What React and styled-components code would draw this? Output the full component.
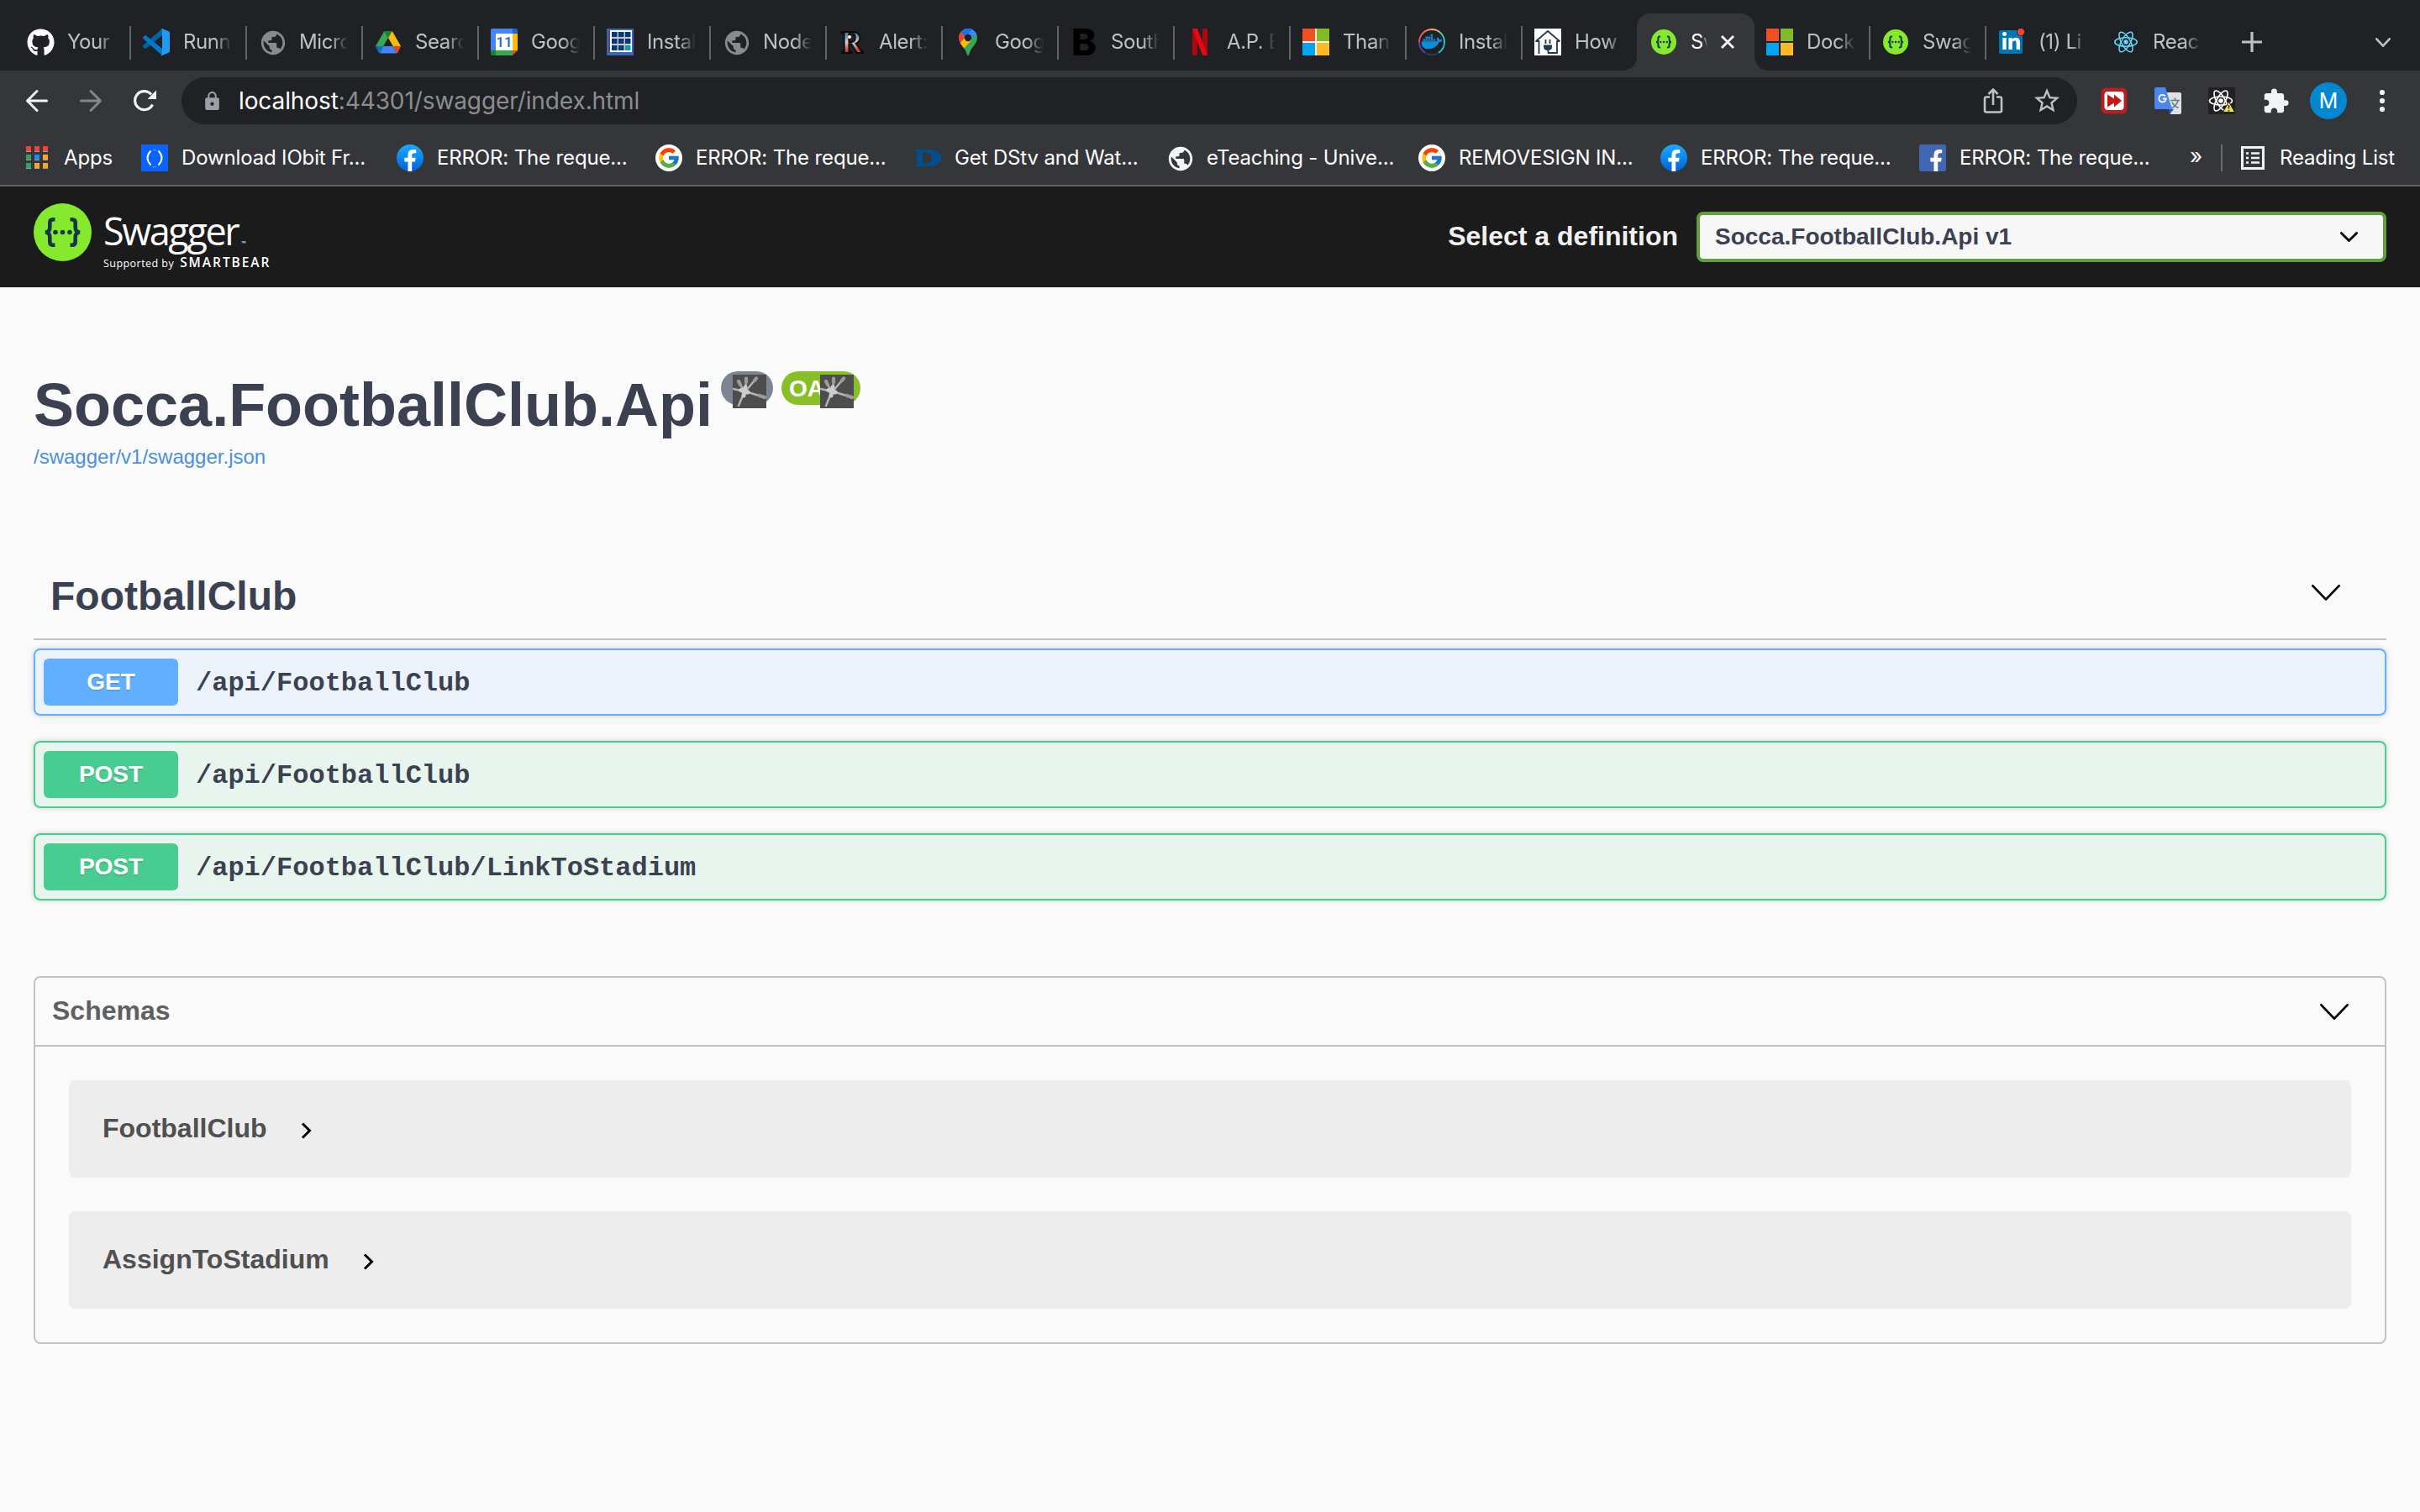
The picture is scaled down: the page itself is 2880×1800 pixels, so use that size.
import React from 'react';
import styled, { createGlobalStyle } from 'styled-components';
import { FaGithub, FaDocker, FaLinkedinIn } from 'react-icons/fa';
import { FcGoogle } from 'react-icons/fc';
import { MdPublic, MdExtension, MdLock, MdStarBorder } from 'react-icons/md';

const Global = createGlobalStyle`
  * { box-sizing: border-box; }
  body { margin: 0; background: #fafafa; font-family: "Liberation Sans", Arial, sans-serif; }
  h1, h2, h3, p { margin: 0; }
  svg { display: block; flex: none; }
`;

/* ---------- browser chrome ---------- */
const Page = styled.div`
  width: 2880px;
  height: 1800px;
  overflow: hidden;
  background: #fafafa;
`;
const Chrome = styled.header`
  font-family: Inter, "Noto Sans", sans-serif;
  background: #35363a;
`;
const TabStrip = styled.div`
  display: flex;
  height: 84px;
  padding: 16px 0 0 18px;
  background: #202124;
`;
const Tab = styled.div`
  flex: none;
  width: ${p => p.$w || 138}px;
  height: 68px;
  display: flex;
  align-items: center;
  gap: 16px;
  padding: 0 0 0 14px;
  position: relative;
`;
const Divider = styled.i`
  width: 2px;
  height: 40px;
  background: #606367;
  margin: 2px 0 0 auto;
`;
const ActiveTab = styled(Tab)`
  width: 140px;
  background: #35363a;
  border-radius: 16px 16px 0 0;
  margin: 0 0 0 -2px;
  padding-left: 16px;
  &::before, &::after {
    content: "";
    position: absolute;
    bottom: 0;
    width: 16px;
    height: 16px;
  }
  &::before { left: -16px; background: radial-gradient(circle at 0 0, transparent 15.5px, #35363a 16px); }
  &::after { right: -16px; background: radial-gradient(circle at 100% 0, transparent 15.5px, #35363a 16px); }
`;
const Favicon = styled.span`
  flex: none;
  width: 32px;
  height: 32px;
  display: grid;
  place-items: center;
`;
const TabTitle = styled.span`
  flex: none;
  width: ${p => p.$w || 58}px;
  overflow: hidden;
  white-space: nowrap;
  font-size: 24px;
  line-height: 36px;
  letter-spacing: -0.4px;
  color: ${p => (p.$active ? '#fff' : '#bdc1c6')};
  mask-image: linear-gradient(90deg, #000 65%, transparent);
`;
const StripActions = styled.div`
  flex: 1;
  display: flex;
  justify-content: space-between;
  align-items: center;
  padding: 0 35px 0 32px;
`;
const Toolbar = styled.div`
  height: 72px;
  display: flex;
  align-items: center;
  padding: 0 24px 0 28px;
`;
const NavButtons = styled.div`
  display: flex;
  gap: 32px;
  width: 188px;
`;
const Omnibox = styled.div`
  width: 2256px;
  height: 56px;
  border-radius: 28px;
  background: #202124;
  display: flex;
  align-items: center;
  padding: 0 18px 0 24px;
`;
const Url = styled.span`
  flex: 1;
  margin-left: 19px;
  font-size: 28px;
  line-height: 40px;
  letter-spacing: -0.1px;
  color: #8c8d90;
  white-space: nowrap;
  b { font-weight: 400; color: #fff; }
`;
const OmniActions = styled.div`
  display: flex;
  align-items: center;
  gap: 30px;
`;
const Extensions = styled.div`
  display: flex;
  align-items: center;
  padding-left: 28px;
  gap: 32px;
`;
const Avatar = styled.div`
  width: 44px;
  height: 44px;
  margin: 0 -6px 0 -8px;
  border-radius: 50%;
  background: #0288d1;
  color: #fff;
  display: grid;
  place-items: center;
  font-size: 25px;
`;
const Bookmarks = styled.nav`
  height: 66px;
  display: flex;
  align-items: center;
  padding: 0 0 0 28px;
  border-bottom: 2px solid #5f6066;
`;
const Bookmark = styled.div`
  flex: none;
  width: ${p => p.$w}px;
  display: flex;
  align-items: center;
  gap: ${p => p.$gap || 16}px;
  white-space: nowrap;
  font-size: 24px;
  line-height: 32px;
  letter-spacing: -0.15px;
  color: #fff;
`;
const More = styled.span`
  width: 37px;
  color: #fff;
  font-size: 26px;
  line-height: 32px;
  margin: -4px 0 0 14px;
`;
const BookmarkRule = styled.i`
  width: 2px;
  height: 32px;
  background: #6b6c70;
  margin-right: 22px;
`;

/* ---------- swagger page ---------- */
const Topbar = styled.div`
  height: 120px;
  background: #1b1b1b;
  display: flex;
  align-items: center;
  justify-content: space-between;
  padding: 0 40px;
`;
const Logo = styled.div`
  display: flex;
  gap: 14px;
  height: 80px;
  color: #fff;
  font-family: "Open Sans", sans-serif;
`;
const LogoText = styled.div`
  display: flex;
  flex-direction: column;
`;
const Wordmark = styled.div`
  display: flex;
  align-items: baseline;
  font-size: 45px;
  line-height: 58px;
  height: 58px;
  letter-spacing: -2.4px;
  margin-top: 4px;
  small { font-size: 7px; letter-spacing: 0; margin-left: 4px; }
`;
const Supported = styled.div`
  display: flex;
  align-items: baseline;
  gap: 7px;
  margin-top: -2px;
  font-size: 12.5px;
  line-height: 20px;
  letter-spacing: 0.45px;
  b { font-size: 15.5px; font-weight: 600; letter-spacing: 1.95px; }
`;
const Definition = styled.label`
  display: flex;
  align-items: center;
  gap: 22px;
  color: #f0f0f0;
  font-size: 32px;
  font-weight: 700;
  line-height: 36px;
  span { margin-top: -2px; }
`;
const Select = styled.div`
  width: 821px;
  height: 60px;
  display: flex;
  align-items: center;
  justify-content: space-between;
  padding: 0 30px 0 18px;
  border: 4px solid #62a03f;
  border-radius: 8px;
  background: #f7f7f7;
  color: #3b4151;
  font-size: 28px;
`;
const Main = styled.main`
  padding: 0 40px;
  color: #3b4151;
`;
const Info = styled.section`
  height: 326px;
  padding-top: 98px;
`;
const TitleRow = styled.div`
  display: flex;
  align-items: flex-start;
  gap: 10px;
`;
const Title = styled.h1`
  font-size: 72px;
  line-height: 84px;
`;
const Pill = styled.span`
  position: relative;
  width: ${p => p.$w}px;
  height: 40px;
  margin-top: 2px;
  border-radius: 20px;
  background: ${p => p.$bg};
  color: #fff;
  font-size: 28px;
  font-weight: 700;
  line-height: 41px;
  padding-left: 9px;
  svg { position: absolute; right: 8px; top: 4px; }
`;
const SpecLink = styled.a`
  display: block;
  margin-top: 6px;
  font-size: 24px;
  line-height: 28px;
  color: #4990e2;
`;
const TagHeader = styled.div`
  display: flex;
  align-items: center;
  justify-content: space-between;
  height: 94px;
  padding: 0 55px 0 20px;
  border-bottom: 2px solid rgba(59, 65, 81, 0.3);
  h2 { font-size: 48px; line-height: 56px; margin-top: -8px; }
  svg { margin-top: -18px; }
`;
const Operations = styled.div`
  display: flex;
  flex-direction: column;
  gap: 30px;
  padding-top: 10px;
`;
const Operation = styled.div`
  height: 80px;
  display: flex;
  align-items: center;
  gap: 21px;
  padding: 0 10px;
  border: 2px solid ${p => p.$color};
  border-radius: 8px;
  background: ${p => p.$bg};
  box-shadow: 0 0 6px rgba(0, 0, 0, 0.19);
`;
const Method = styled.span`
  width: 160px;
  height: 56px;
  border-radius: 6px;
  background: ${p => p.$color};
  color: #fff;
  font-size: 28px;
  font-weight: 700;
  line-height: 56px;
  text-align: center;
  text-shadow: 0 2px 0 rgba(0, 0, 0, 0.1);
`;
const Path = styled.span`
  font-family: "Liberation Mono", monospace;
  font-size: 32px;
  font-weight: 700;
  line-height: 40px;
  margin-top: 3px;
`;
const Schemas = styled.section`
  margin-top: 90px;
  height: 438px;
  border: 2px solid rgba(59, 65, 81, 0.3);
  border-radius: 8px;
`;
const SchemasHeader = styled.div`
  height: 82px;
  display: flex;
  align-items: center;
  justify-content: space-between;
  padding: 0 43px 0 20px;
  border-bottom: 2px solid rgba(59, 65, 81, 0.3);
  color: #606060;
  h3 { font-size: 32px; line-height: 38px; margin-top: -3px; }
`;
const Models = styled.div`
  display: flex;
  flex-direction: column;
  gap: 40px;
  padding: 40px;
`;
const Model = styled.div`
  height: 116px;
  display: flex;
  align-items: center;
  gap: 40px;
  padding: 0 40px;
  border-radius: 8px;
  background: #ededed;
  color: #505050;
  font-size: 32px;
  font-weight: 700;
  span { line-height: 36px; margin-top: -3px; }
  svg { margin-top: 4px; }
`;

/* ---------- drawings ---------- */
const Braces = ({ s = 32 }) => (
  <svg width={s} height={s} viewBox="0 0 69 69">
    <circle cx="34.5" cy="34.5" r="34.5" fill="#85ea2d" />
    <g fill="none" stroke="#173647" strokeWidth="4.6">
      <path d="M25.5 19.3h-2.2q-4 0-4 4v5.4q0 5.8-5.6 5.8q5.6 0 5.6 5.8v5.4q0 4 4 4h2.2" />
      <path d="M43.5 19.3h2.2q4 0 4 4v5.4q0 5.8 5.6 5.8q-5.6 0-5.6 5.8v5.4q0 4-4 4h-2.2" />
    </g>
    <g fill="#173647"><circle cx="26" cy="34.5" r="2.8" /><circle cx="34.5" cy="34.5" r="2.8" /><circle cx="43" cy="34.5" r="2.8" /></g>
  </svg>
);
const Code = () => (
  <svg width="32" height="32" viewBox="0 0 32 32">
    <path d="M23 0v8L4 23.5q-1 .8-2 0L.4 22q-.8-1 0-2z" fill="#0065a9" />
    <path d="M23 32v-8L4 8.500q-1-.8-2 0L.4 10q-.8 1 0 2z" fill="#007acc" />
    <path d="M23 0l8 3.500q1 .5 1 1.500v22q0 1-1 1.500L23 32q-1 0-1.500-.6Q23 31 23 29V3q0-2-1.500-2.400Q22 0 23 0z" fill="#1f9cf0" />
  </svg>
);
const Drive = () => (
  <svg width="30" height="27" viewBox="0 0 30 27">
    <path d="M10.300 0L0 18l4.500 8 L15 8z" fill="#34a853" />
    <path d="M10.300 0h9.400L15 8z" fill="#188038" />
    <path d="M19.700 0L30 18h-9.200L15 8z" fill="#fbbc04" />
    <path d="M0 18h9.200L5 26q-1.500-.5-2-1.500z" fill="#1967d2" />
    <path d="M9.200 18h11.600L25 26.500H5z" fill="#4285f4" />
    <path d="M20.800 18H30l-3 6.500q-.5 1.200-2 2z" fill="#ea4335" />
  </svg>
);
const Calendar = () => (
  <svg width="32" height="32" viewBox="0 0 32 32">
    <path d="M2 0h24v6H0V2q0-2 2-2z" fill="#4285f4" /><path d="M0 6h6v20H0z" fill="#4285f4" />
    <path d="M26 0h4q2 0 2 2v4h-6z" fill="#1967d2" /><path d="M26 6h6v20h-6z" fill="#fbbc04" />
    <path d="M0 26h6v6H2q-2 0-2-2z" fill="#188038" /><path d="M6 26h20v6H6z" fill="#34a853" />
    <path d="M26 26h6l-6 6z" fill="#ea4335" /><path d="M6 6h20v20H6z" fill="#fff" />
    <text x="16" y="22" textAnchor="middle" fontFamily="Roboto, sans-serif" fontWeight="500" fontSize="17" fill="#1967d2">11</text>
  </svg>
);
const Table = () => (
  <svg width="32" height="32" viewBox="0 0 32 32">
    <path d="M0 0h32v32H0z" fill="#3a66b8" /><path d="M2 2h28v26H2z" fill="#fff" /><path d="M2 2h2v26H2z" fill="#555" />
    <path d="M6 4h22v22H6z" fill="#c9c3cc" />
    {[4, 12, 20].map(y => [6, 14, 22].map(x => (
      <rect key={x + '-' + y} x={x} y={y} width="6.500" height="6" fill={x === 22 && y === 20 ? '#0aa39a' : '#003b75'} />
    )))}
  </svg>
);
const LetterR = () => (
  <svg width="32" height="32" viewBox="0 0 32 32">
    <defs>
      <linearGradient id="flag" x1="0" y1="0" x2="0" y2="1">
        <stop offset="0.300" stopColor="#5b86a6" /><stop offset="0.500" stopColor="#d9d2c4" /><stop offset="0.750" stopColor="#c8403a" />
      </linearGradient>
    </defs>
    <text x="3" y="29" fontFamily="Liberation Serif, serif" fontWeight="700" fontSize="38" fill="url(#flag)" stroke="#0b0b0c" strokeWidth="1.800" textLength="26" lengthAdjust="spacingAndGlyphs">R</text>
    <circle cx="13" cy="10" r="2" fill="#fff" />
  </svg>
);
const Pin = () => (
  <svg width="22" height="32" viewBox="0 0 22 32">
    <defs><clipPath id="pin"><path d="M11 0a11 11 0 0 1 11 11c0 8-8 11-9.800 20q-.3 1-1.200 1t-1.200-1C8 22 0 19 0 11A11 11 0 0 1 11 0z" /></clipPath></defs>
    <g clipPath="url(#pin)">
      <path d="M0 0h22v32H0z" fill="#34a853" />
      <path d="M3-3h22v8L11 14z" fill="#4285f4" />
      <path d="M-2 0L3 3l8 8-8 9-5-3z" fill="#ea4335" /><path d="M2 3L12-3l5 3-9 10z" fill="#1a73e8" />
      <path d="M1 18l7-8 7 4-9 10z" fill="#fbbc04" />
    </g>
    <circle cx="11" cy="11" r="4.200" fill="#202124" />
  </svg>
);
const LetterB = () => (
  <svg width="32" height="32" viewBox="0 0 32 32">
    <text x="1" y="32" fontFamily="Inter, sans-serif" fontWeight="800" fontSize="44" fill="#000" textLength="30" lengthAdjust="spacingAndGlyphs">B</text>
  </svg>
);
const Netflix = () => (
  <svg width="32" height="32" viewBox="0 0 32 32">
    <path d="M7 0h6v31.500L7 32zM19 0h6v32l-6-.500z" fill="#b1060f" /><path d="M7 0h6l12 32-6-.500z" fill="#e50914" />
  </svg>
);
const Windows = ({ gap = 2, line }) => (
  <svg width="32" height="32" viewBox="0 0 32 32">
    {line && <path d="M0 0h32v32H0z" fill="#f5f2e4" />}
    <path d={`M0 0h${16 - gap / 2}v${16 - gap / 2}H0z`} fill="#f25022" />
    <path d={`M${16 + gap / 2} 0H32v${16 - gap / 2}H${16 + gap / 2}z`} fill="#7fba27" />
    <path d={`M0 ${16 + gap / 2}h${16 - gap / 2}V32H0z`} fill="#00a4ef" />
    <path d={`M${16 + gap / 2} ${16 + gap / 2}H32V32H${16 + gap / 2}z`} fill="#ffb927" />
  </svg>
);
const Docker = () => (
  <svg width="32" height="32" viewBox="0 0 32 32">
    <defs><linearGradient id="ring" x1="0" y1="0" x2="1" y2="0"><stop stopColor="#f0506e" /><stop offset=".6" stopColor="#ffb05c" /><stop offset="1" stopColor="#35d0d8" /></linearGradient></defs>
    <path d="M1 16a15 15 0 0 1 30 0" fill="none" stroke="url(#ring)" strokeWidth="1.800" />
    <path d="M31 16a15 15 0 0 1-7 12.700" fill="none" stroke="#28c8d8" strokeWidth="1.800" />
    <path d="M24 28.700A15 15 0 0 1 8 28.700" fill="none" stroke="#1c4260" strokeWidth="1.800" />
    <path d="M8 28.700A15 15 0 0 1 1 16" fill="none" stroke="#5b4aa0" strokeWidth="1.800" />
    <FaDocker x="3.500" y="3" size={25} color="#0f8dd6" />
  </svg>
);
const House = () => (
  <svg width="32" height="32" viewBox="0 0 32 32">
    <path d="M0 0h32v32H0z" fill="#fff" />
    <g fill="none" stroke="#22384c" strokeWidth="1.800">
      <path d="M5.500 30V15H2L16 3l14 12h-3v14h-10.500v-4" strokeLinejoin="round" /><path d="M13.500 13v5M18.500 13v5" />
    </g>
    <path d="M11 19.500h10v2q0 4.500-5 4.500t-5-4.500z" fill="#22384c" />
  </svg>
);
const LinkedIn = () => (
  <svg width="32" height="32" viewBox="0 0 32 32">
    <rect x="1" y="2" width="28" height="28" rx="2" fill="#0077b5" />
    <FaLinkedinIn x="3.500" y="4" size={24} color="#fff" />
    <circle cx="27" cy="4" r="5" fill="#202124" /><circle cx="27" cy="4" r="4.200" fill="#f44336" />
  </svg>
);
const ReactLogo = () => (
  <svg width="32" height="32" viewBox="0 0 32 32">
    <g fill="none" stroke="#61dafb" strokeWidth="1.500">
      {[0, 60, 120].map(a => <ellipse key={a} cx="16" cy="16" rx="13.300" ry="5.200" transform={`rotate(${a} 16 16)`} />)}
    </g>
    <circle cx="16" cy="16" r="2.700" fill="#61dafb" />
  </svg>
);
const Facebook = ({ square }) => (
  <svg width="32" height="32" viewBox="0 0 32 32">
    <defs><linearGradient id="fb" x1="0" y1="0" x2="0" y2="1"><stop stopColor="#18acfe" /><stop offset="1" stopColor="#0163e0" /></linearGradient></defs>
    {square ? <rect width="32" height="32" rx="2" fill="#4267b2" /> : <circle cx="16" cy="16" r="16" fill="url(#fb)" />}
    <path transform={square ? 'translate(4 0)' : undefined} d="M13.500 32V20.500H9.300v-4.700h4.200v-3.600q0-6.300 6.200-6.300 1.800 0 3.500.3v4h-2q-3 0-3 2.700v2.900h4.600l-.8 4.700h-3.800V32z" fill="#fff" />
  </svg>
);
const Google = () => (
  <svg width="32" height="32" viewBox="0 0 32 32"><circle cx="16" cy="16" r="16" fill="#fff" /><FcGoogle x="2" y="2" size={28} /></svg>
);
const Iobit = () => (
  <svg width="32" height="32" viewBox="0 0 32 32">
    <path d="M0 0h32v32H0z" fill="#0a63ff" />
    <path d="M11.500 7.500q-8 8.500 0 17M20.500 7.500q8 8.500 0 17" fill="none" stroke="#fff" strokeWidth="1.900" />
    <path d="M14 6.500L18.500 7M13.500 27l4.500-.5" stroke="#4d8cff" strokeWidth="1.500" />
  </svg>
);
const LetterD = () => (
  <svg width="32" height="32" viewBox="0 0 32 32">
    <path fillRule="evenodd" d="M0 6h16Q32 6 32 16T16 26H0l3-3V9zM10 9.500v13h4q7 0 7-6.500t-7-6.500z" fill="#00508f" />
  </svg>
);
const AppsGrid = () => (
  <svg width="32" height="32" viewBox="0 0 32 32">
    {[['#f44336', '#f44336', '#f44336'], ['#34a160', '#1e88f5', '#f5a623'], ['#34a160', '#f5a623', '#f5a623']].map((r, y) =>
      r.map((c, x) => (
        <g key={x + '-' + y}><rect x={3 + x * 10} y={2 + y * 10} width="6" height="7" fill="#9aa0a6" /><rect x={3 + x * 10} y={2 + y * 10} width="6" height="6" fill={c} /></g>
      ))
    )}
  </svg>
);
const ReadingList = () => (
  <svg width="28" height="28" viewBox="0 0 28 28" fill="none" stroke="#f1f3f4" strokeWidth="3">
    <path d="M1.500 1.500h25v25h-25z" /><path d="M6 8.500h3M12 8.500h10M6 14h3M12 14h10M6 19.500h3M12 19.500h10" strokeWidth="2.600" />
  </svg>
);
const Back = ({ color, flip }) => (
  <svg width="32" height="32" viewBox="0 0 32 32" fill="none" stroke={color} strokeWidth="3" strokeLinecap="round" strokeLinejoin="round" transform={flip ? 'scale(-1 1)' : undefined}>
    <path d="M27.500 16H5M16 4.500L4.500 16 16 27.500" />
  </svg>
);
const Reload = () => (
  <svg width="32" height="32" viewBox="0 0 32 32">
    <path d="M25.500 20.500A11 11 0 1 1 24 8.500" fill="none" stroke="#f1f3f4" strokeWidth="3.200" />
    <path d="M30 3.500V14H19.500z" fill="#f1f3f4" />
  </svg>
);
const Share = () => (
  <svg width="32" height="32" viewBox="0 0 32 32" fill="none" stroke="#bdc1c6" strokeWidth="2.600" strokeLinejoin="round">
    <path d="M12 11.500H8q-2 0-2 2v14q0 2 2 2h16q2 0 2-2v-14q0-2-2-2h-4" /><path d="M16 21V3M10.500 8L16 2.500 21.500 8" />
  </svg>
);
const FastForward = () => (
  <svg width="32" height="32" viewBox="0 0 32 32">
    <rect x=".5" y=".5" width="31" height="31" rx="6" fill="#b82020" /><rect x="4.500" y="5" width="23" height="22" rx="4" fill="#fff" />
    <path d="M8 8.500l8 5v-5l9 7.500-9 7.500v-5l-8 5z" fill="#c01818" />
  </svg>
);
const Translate = () => (
  <svg width="32" height="32" viewBox="0 0 32 32">
    <path d="M12 6h18q2 0 2 2v22q0 2-2 2H19z" fill="#dfe1e5" />
    <path d="M17 26h6l-5 6z" fill="#3157b8" /><path d="M2 0h11l8 26H2q-2 0-2-2V2q0-2 2-2z" fill="#4d86f0" />
    <path d="M19 15.500h11M24.500 12.500v3M28 16q-2 6-8 9M21 17.500q2.500 5 7.500 7" fill="none" stroke="#607d8b" strokeWidth="1.600" />
    <path d="M12.800 10.400A4.300 4.300 0 1 0 13.800 13.500H9.800" fill="none" stroke="#fff" strokeWidth="1.900" />
  </svg>
);
const ReactWarn = () => (
  <svg width="32" height="32" viewBox="0 0 32 32">
    <rect width="32" height="32" rx="2" fill="#212121" />
    <g fill="none" stroke="#fff" strokeWidth="1.600">
      {[0, 60, 120].map(a => <ellipse key={a} cx="15" cy="16" rx="13.500" ry="5" transform={`rotate(${a} 15 16)`} />)}
    </g>
    <circle cx="15" cy="16" r="2.800" fill="#fff" />
    <path d="M24.500 17l7 12.500h-14z" fill="#f5e64c" stroke="#212121" /><path d="M24.500 21v4.500M24.500 27v1.500" stroke="#333" strokeWidth="1.600" />
  </svg>
);
const Dots = () => (
  <svg width="32" height="32" viewBox="0 0 32 32" fill="#f1f3f4"><circle cx="16" cy="6" r="3.100" /><circle cx="16" cy="16" r="3.100" /><circle cx="16" cy="26" r="3.100" /></svg>
);
const Chevron = ({ w = 34, h = 19, color = '#000', sw = 2.8 }) => (
  <svg width={w} height={h} viewBox={`0 0 ${w} ${h}`} fill="none" stroke={color} strokeWidth={sw} strokeLinecap="round" strokeLinejoin="round">
    <path d={`M${sw / 2} ${sw / 2}L${w / 2} ${h - sw / 2}L${w - sw / 2} ${sw / 2}`} />
  </svg>
);
const Next = () => (
  <svg width="14" height="20" viewBox="0 0 14 20" fill="none" stroke="#000" strokeWidth="3"><path d="M2 1.500l8.500 8.500L2 18.500" /></svg>
);
const Splat = () => (
  <svg width="40" height="40" viewBox="0 0 40 40">
    <path d="M0 0h40v40H0z" fill="#4d4d4d" />
    <g fill="none" stroke="#b4b4b4" strokeLinecap="round">
      <path d="M15 20L28 4.500M15 20L16 5M14 20L7 8.500M14 20L1 17M14 20L7 37M15 20L38 27" strokeWidth="2.400" />
      <path d="M26 7l2-2.500M16 9V4.500M9 12L7 8M32 25l6 2" strokeWidth="4.200" stroke="#9c9c9c" />
      <path d="M10 18.500l8 2.500M15 15l-2 10" strokeWidth="5" stroke="#cdcdcd" />
    </g>
  </svg>
);
const Plus = () => (
  <svg width="24" height="24" viewBox="0 0 24 24" stroke="#bdc1c6" strokeWidth="3.200"><path d="M12 0v24M0 12h24" /></svg>
);
const Close = () => (
  <svg width="16" height="16" viewBox="0 0 16 16" stroke="#fff" strokeWidth="2.800"><path d="M1 1l14 14M15 1L1 15" /></svg>
);
const Globe = ({ color }) => <MdPublic size={34} color={color} />;

const tabs = [
  { icon: <FaGithub size={33} color="#fff" />, title: 'Your' },
  { icon: <Code />, title: 'Runni' },
  { icon: <Globe color="#868b90" />, title: 'Micro' },
  { icon: <Drive />, title: 'Searc' },
  { icon: <Calendar />, title: 'Goog' },
  { icon: <Table />, title: 'Instal' },
  { icon: <Globe color="#868b90" />, title: 'Node' },
  { icon: <LetterR />, title: 'Alert:' },
  { icon: <Pin />, title: 'Goog' },
  { icon: <LetterB />, title: 'South' },
  { icon: <Netflix />, title: 'A.P. B' },
  { icon: <Windows line gap={2} />, title: 'Thank' },
  { icon: <Docker />, title: 'Instal' },
  { icon: <House />, title: 'How t', noRule: true },
  { active: true, title: 'Sw' },
  { icon: <Windows gap={2} />, title: 'Dock' },
  { icon: <Braces s={30} />, title: 'Swag' },
  { icon: <LinkedIn />, title: '(1) Li', w: 136 },
  { icon: <ReactLogo />, title: 'Reac', w: 136 },
];
const bookmarks = [
  [140, <AppsGrid />, 'Apps'],
  [304, <Iobit />, 'Download IObit Fr...'],
  [308, <Facebook />, 'ERROR: The reque...'],
  [308, <Google />, 'ERROR: The reque...'],
  [300, <LetterD />, 'Get DStv and Wat...'],
  [300, <Globe color="#f1f3f4" />, 'eTeaching - Unive...'],
  [288, <Google />, 'REMOVESIGN IN...'],
  [308, <Facebook />, 'ERROR: The reque...'],
  [308, <Facebook square />, 'ERROR: The reque...'],
];
const operations = [
  ['GET', '/api/FootballClub', '#61affe', '#ebf2fa'],
  ['POST', '/api/FootballClub', '#49cc90', '#e8f5ef'],
  ['POST', '/api/FootballClub/LinkToStadium', '#49cc90', '#e8f5ef'],
];

export default function App() {
  return (
    <Page>
      <Global />
      <Chrome>
        <TabStrip>
          {tabs.map((t, i) =>
            t.active ? (
              <ActiveTab key={i}>
                <Favicon><Braces s={30} /></Favicon>
                <TabTitle $active $w={20}>{t.title}</TabTitle>
                <Close />
              </ActiveTab>
            ) : (
              <Tab key={i} $w={t.w}>
                <Favicon>{t.icon}</Favicon>
                <TabTitle>{t.title}</TabTitle>
                {!t.noRule && <Divider />}
              </Tab>
            )
          )}
          <StripActions>
            <Plus />
            <Chevron w={18} h={11} color="#bdc1c6" sw={2.6} />
          </StripActions>
        </TabStrip>
        <Toolbar>
          <NavButtons>
            <Back color="#f1f3f4" />
            <Back color="#85868a" flip />
            <Reload />
          </NavButtons>
          <Omnibox>
            <MdLock size={25} color="#9aa0a6" />
            <Url><b>localhost</b>:44301/swagger/index.html</Url>
            <OmniActions>
              <Share />
              <MdStarBorder size={36} color="#bdc1c6" />
            </OmniActions>
          </Omnibox>
          <Extensions>
            <FastForward />
            <Translate />
            <ReactWarn />
            <MdExtension size={33} color="#f1f3f4" />
            <Avatar>M</Avatar>
            <Dots />
          </Extensions>
        </Toolbar>
        <Bookmarks>
          {bookmarks.map(([w, icon, label], i) => (
            <Bookmark key={i} $w={w}><Favicon>{icon}</Favicon>{label}</Bookmark>
          ))}
          <More>»</More>
          <BookmarkRule />
          <Bookmark $w={190} $gap={18}><ReadingList />Reading List</Bookmark>
        </Bookmarks>
      </Chrome>

      <Topbar>
        <Logo>
          <Braces s={69} />
          <LogoText>
            <Wordmark>Swagger<small>™</small></Wordmark>
            <Supported>Supported by <b>SMARTBEAR</b></Supported>
          </LogoText>
        </Logo>
        <Definition>
          <span>Select a definition</span>
          <Select>
            Socca.FootballClub.Api v1
            <Chevron w={21} h={12} sw={2.8} />
          </Select>
        </Definition>
      </Topbar>

      <Main>
        <Info>
          <TitleRow>
            <Title>Socca.FootballClub.Api</Title>
            <Pill $w={62} $bg="#7d8492"><Splat /></Pill>
            <Pill $w={94} $bg="#89bf26">OA<Splat /></Pill>
          </TitleRow>
          <SpecLink>/swagger/v1/swagger.json</SpecLink>
        </Info>
        <TagHeader>
          <h2>FootballClub</h2>
          <Chevron />
        </TagHeader>
        <Operations>
          {operations.map(([method, path, color, bg], i) => (
            <Operation key={i} $color={color} $bg={bg}>
              <Method $color={color}>{method}</Method>
              <Path>{path}</Path>
            </Operation>
          ))}
        </Operations>
        <Schemas>
          <SchemasHeader>
            <h3>Schemas</h3>
            <Chevron />
          </SchemasHeader>
          <Models>
            <Model><span>FootballClub</span><Next /></Model>
            <Model><span>AssignToStadium</span><Next /></Model>
          </Models>
        </Schemas>
      </Main>
    </Page>
  );
}
